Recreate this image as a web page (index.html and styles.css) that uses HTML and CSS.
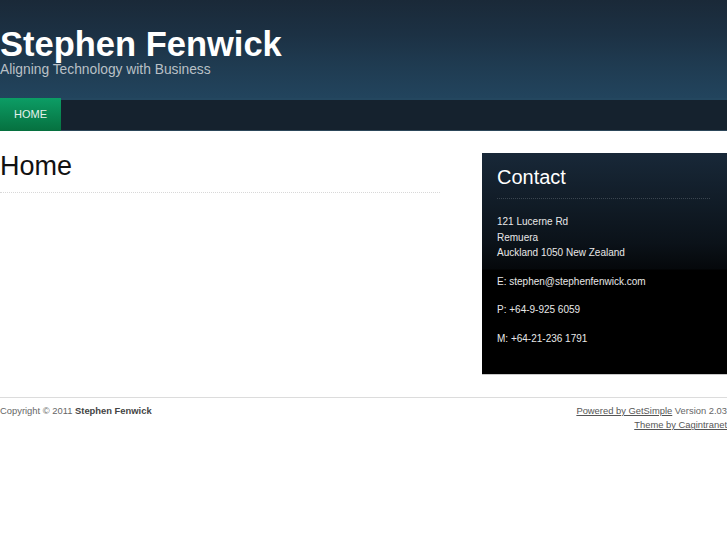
FILE: index.html
```html
<!DOCTYPE html>
<html lang="en">

<head>
    <meta charset="UTF-8">
    <title>Stephen Fenwick - Home</title>
    <link rel="stylesheet" href="styles.css">
</head>

<body>
    <div class="header">
        <div class="site-title">Stephen Fenwick</div>
        <div class="tagline">Aligning Technology with Business</div>
    </div>

    <div class="nav">
        <a class="nav-item current" href="#">HOME</a>
    </div>

    <div class="wrapper">
        <div class="content">
            <h1>Home</h1>
        </div>

        <!-- Sidebar -->
        <div class="sidebar">
            <h2>Contact</h2>
            <p>121 Lucerne Rd<br>Remuera<br>Auckland 1050 New Zealand</p>
            <p>E: stephen@stephenfenwick.com</p>
            <p>P: +64-9-925 6059</p>
            <p>M: +64-21-236 1791</p>
        </div>
    </div>

    <div class="footer">
        <div class="copyright">Copyright &copy; 2011 <strong>Stephen Fenwick</strong></div>
        <div class="credits">
            <a href="#">Powered by GetSimple</a> Version 2.03<br>
            <a href="#">Theme by Cagintranet</a>
        </div>
    </div>
</body>

</html>
```

FILE: styles.css
```css
body {
    margin: 0;
    font-family: "Liberation Sans", Arial, sans-serif;
    background: #fff;
    color: #222;
}

.header {
    height: 100px;
    padding-top: 27px;
    box-sizing: border-box;
    background: linear-gradient(#1a2938 0, #1c3144 35px, #1f3b51 65px, #22445d 97px);
    border-bottom: 2px solid #24475f;
}

.site-title {
    color: #fff;
    font-size: 34.5px;
    font-weight: bold;
    line-height: 34px;
}

.tagline {
    color: #b9c0c6;
    font-size: 13.8px;
    line-height: 18px;
}

.nav {
    background: #15222e;
    height: 30px;
    border-bottom: 1px solid #2c4659;
    display: flex;
}

.nav-item {
    display: block;
    width: 61px;
    height: 33px;
    margin-top: -2px;
    line-height: 33px;
    text-align: center;
    font-size: 11px;
    color: #e6f2ec;
    text-decoration: none;
    background: linear-gradient(#0c9d65, #06703f);
}

.wrapper {
    display: flex;
    justify-content: space-between;
    align-items: flex-start;
}

.content {
    width: 440px;
}

.content h1 {
    margin: 20px 0 0 0;
    font-size: 27px;
    font-weight: normal;
    line-height: 30px;
    color: #111;
    padding-bottom: 11px;
    border-bottom: 1px dotted #d8d8d8;
}

.sidebar {
    width: 245px;
    box-sizing: border-box;
    margin-top: 22px;
    padding: 12px 17px 15px 15px;
    background: linear-gradient(#182838 0, #0b1219 90px, #05080b 116px, #000 117px);
    border-bottom: 1px solid #c8c8c8;
    color: #e8e8e8;
}

.sidebar h2 {
    margin: 0 0 15px 0;
    font-size: 20px;
    font-weight: normal;
    line-height: 24px;
    color: #fff;
    padding-bottom: 9px;
    border-bottom: 1px dotted #3a4550;
}

.sidebar p {
    margin: 0 0 13px 0;
    font-size: 10px;
    line-height: 15.5px;
}

.footer {
    margin-top: 22px;
    border-top: 1px solid #dcdcdc;
    padding-top: 6px;
    display: flex;
    justify-content: space-between;
    font-size: 9.4px;
    line-height: 14px;
    color: #666;
}

.copyright strong {
    color: #444;
}

.credits {
    text-align: right;
}

.credits a {
    color: #555;
}
```
